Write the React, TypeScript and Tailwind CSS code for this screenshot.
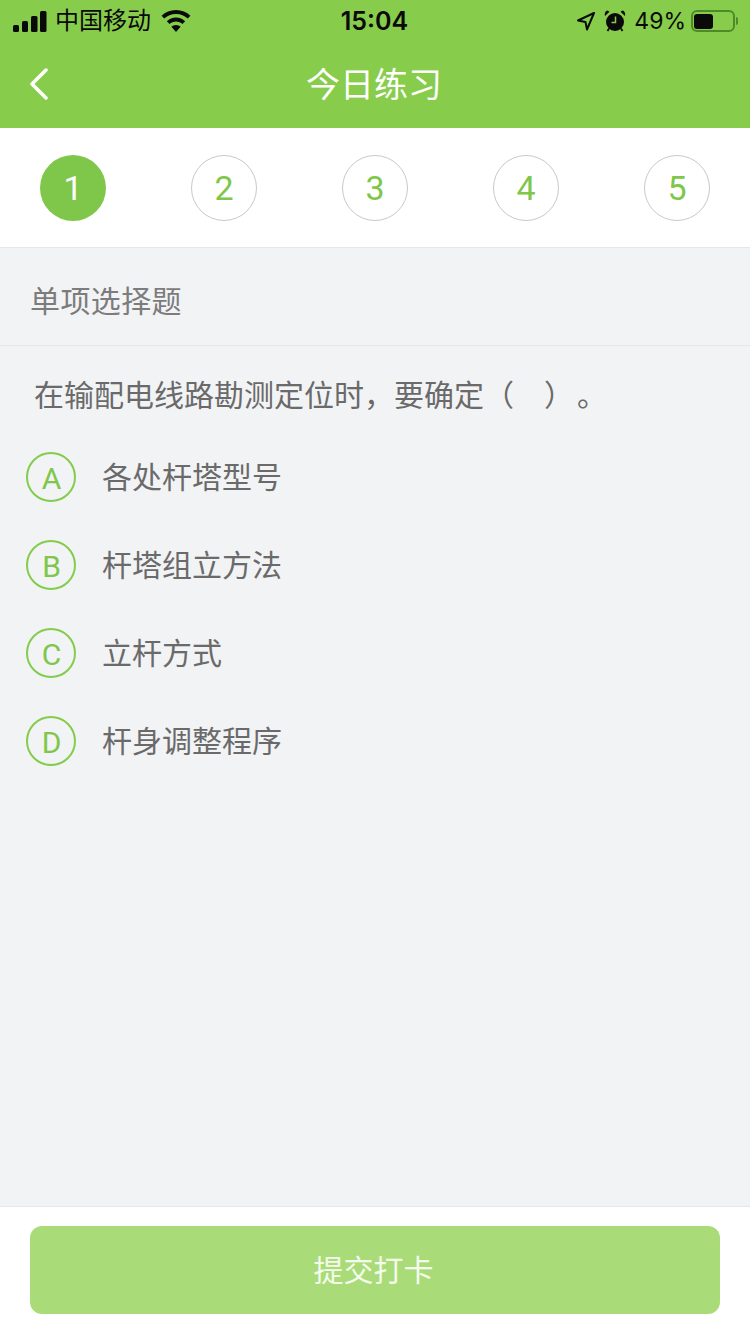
const CJK = "font-['Roboto','Noto_Sans_CJK_SC',sans-serif]";
const STATUS = "font-['Inter','Noto_Sans_CJK_SC',sans-serif]";

const steps = ["1", "2", "3", "4", "5"];
const options = [
  { key: "A", text: "各处杆塔型号" },
  { key: "B", text: "杆塔组立方法" },
  { key: "C", text: "立杆方式" },
  { key: "D", text: "杆身调整程序" },
];

function SignalIcon() {
  return (
    <svg width="34" height="21" viewBox="0 0 34 21" fill="#0a0a0a">
      <rect x="0" y="14" width="6" height="7" rx="1.5" />
      <rect x="9" y="10" width="6" height="11" rx="1.5" />
      <rect x="18" y="5" width="6.500" height="16" rx="1.5" />
      <rect x="27" y="0" width="6.500" height="21" rx="1.5" />
    </svg>
  );
}

function WifiIcon() {
  return (
    <svg width="30" height="22" viewBox="0 0 30 22" fill="#0a0a0a">
      <path d="M15 0C9.3 0 4.3 2.2.6 5.8l2.6 2.8C6.2 5.700 10.400 4 15 4s8.800 1.700 11.800 4.600l2.600-2.800C25.700 2.200 20.700 0 15 0z" />
      <path d="M15 7.500c-3.600 0-6.800 1.400-9.200 3.700l2.700 2.800c1.700-1.600 4-2.600 6.500-2.600s4.800 1 6.500 2.600l2.700-2.800c-2.400-2.300-5.600-3.700-9.200-3.700z" />
      <path d="M15 15c-1.800 0-3.400.7-4.600 1.800L15 22l4.600-5.200C18.400 15.700 16.800 15 15 15z" />
    </svg>
  );
}

function LocationIcon() {
  return (
    <svg width="20" height="20" viewBox="0 0 20 20" fill="none" stroke="#0a0a0a" strokeWidth="2" strokeLinejoin="round">
      <path d="M18 2 2 9.500l7.500 1.500 1.500 7.500z" />
    </svg>
  );
}

function AlarmIcon() {
  return (
    <svg width="22" height="22" viewBox="0 0 22 22" fill="#0a0a0a">
      <circle cx="11" cy="12" r="9" />
      <path d="M1 6 5.500 1.800 3.500.6C1.800.9.300 3 1 6zM21 6l-4.500-4.200 2-1.200c1.700.3 3.200 2.400 2.500 5.400z" />
      <path d="M5 18.500 3.500 21M17 18.500l1.500 2.500" stroke="#0a0a0a" strokeWidth="1.800" />
      <path d="M11.500 6.500v6H7.500" fill="none" stroke="#87cd4b" strokeWidth="1.500" />
    </svg>
  );
}

function BatteryIcon() {
  return (
    <div className="flex items-center">
      <div className="flex h-[22px] w-[44px] items-center rounded-[6px] border-2 border-[#4f8a2a] p-[1px]">
        <div className="h-[15px] w-[19px] rounded-[3px] bg-[#0a0a0a]" />
      </div>
      <div className="ml-[1px] h-[8px] w-[2px] rounded-r-sm bg-[#4f8a2a]" />
    </div>
  );
}

function StatusBar() {
  return (
    <div className={`${STATUS} relative flex h-[42px] items-center justify-between pl-[13px] pr-[12px] text-[#0a0a0a]`}>
      <div className="flex items-center gap-[8px]">
        <SignalIcon />
        <span className="text-[24px] leading-none">中国移动</span>
        <div className="ml-[2px]">
          <WifiIcon />
        </div>
      </div>
      <span className="absolute left-0 right-0 pr-[1px] text-center text-[25px] font-semibold leading-none">15:04</span>
      <div className="flex items-center">
        <LocationIcon />
        <div className="ml-[8px]">
          <AlarmIcon />
        </div>
        <span className="ml-[8px] text-[23px] leading-none">49%</span>
        <div className="ml-[5px]">
          <BatteryIcon />
        </div>
      </div>
    </div>
  );
}

export default function App() {
  return (
    <div className={`${CJK} flex h-[1334px] w-[750px] flex-col bg-[#f2f3f5]`}>
      <header className="h-32 bg-[#87cd4b]">
        <StatusBar />
        <div className="relative flex h-[86px] items-center justify-center pr-[2px]">
          <svg className="absolute left-[29px] top-[26px]" width="20" height="32" viewBox="0 0 20 32" fill="none" stroke="#fff" strokeWidth="3.500" strokeLinecap="round" strokeLinejoin="round">
            <path d="M17 2 3 16l14 14" />
          </svg>
          <h1 className="text-[34px] font-normal leading-none text-white">今日练习</h1>
        </div>
      </header>

      <div className="flex h-[120px] items-start justify-between border-b border-[#e6e7e9] bg-white pl-[40px] pr-[40px] pt-[27px]">
        {steps.map((step, i) => (
          <div
            key={step}
            className={
              i === 0
                ? "flex h-[66px] w-[66px] items-center justify-center rounded-full bg-[#7fc74a] text-[34px] text-white"
                : "flex h-[66px] w-[66px] items-center justify-center rounded-full border border-[#c9c9c9] text-[34px] text-[#7fc74a]"
            }
          >
            {step}
          </div>
        ))}
      </div>

      <div className="flex h-[98px] items-center border-b border-[#e6e7e9] pl-[30px] pt-[10px] text-[30px] tracking-[0.4px] text-[#7c7c7c]">
        单项选择题
      </div>

      <main className="flex-1 text-[#6a6a6a]">
        <p className="pl-[34px] pt-[30px] text-[30px] leading-[40px]">
          在输配电线路勘测定位时，要确定（　）<span className="ml-[18px]">。</span>
        </p>
        <ul className="mt-[17px] flex flex-col">
          {options.map((option) => (
            <li key={option.key} className="flex h-[88px] items-center pl-[26px]">
              <span className="flex h-[50px] w-[50px] items-center justify-center rounded-full border-2 border-[#84cc4c] pl-[1px] pt-[2px] text-[30px] text-[#7fc74a]">
                {option.key}
              </span>
              <span className="ml-[26px] text-[30px]">{option.text}</span>
            </li>
          ))}
        </ul>
      </main>

      <footer className="h-[128px] border-t border-[#e6e7e9] bg-white px-[30px] pt-[19px]">
        <button className="h-[88px] w-full rounded-[12px] bg-[#a9dc78] pr-[3px] text-[30px] text-[#f4fbec]">提交打卡</button>
      </footer>
    </div>
  );
}
